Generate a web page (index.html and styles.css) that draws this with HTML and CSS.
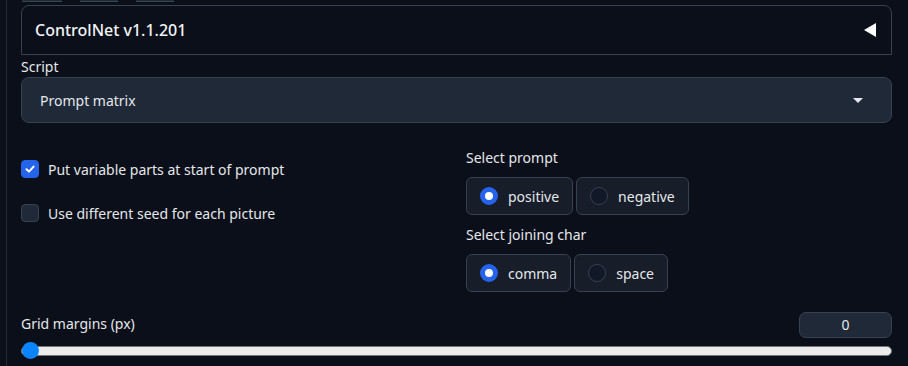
FILE: index.html
```html
<!DOCTYPE html>
<html lang="en">
<head>
<meta charset="UTF-8" />
<meta name="viewport" content="width=device-width, initial-scale=1" />
<title>Script settings</title>
<link rel="stylesheet" href="styles.css">
</head>
<body>

<div class="panel">
  <div class="tabs">
    <div class="tab"></div>
    <div class="tab"></div>
    <div class="tab"></div>
  </div>

  <div class="accordion">
    <span class="accordion-title">ControlNet v1.1.201</span>
    <svg class="accordion-icon" width="12" height="14" viewBox="0 0 12 14"><path d="M12 0 L12 14 L0 7 Z" fill="#fff"/></svg>
  </div>

  <div class="field-label script-label">Script</div>
  <div class="dropdown">
    <span>Prompt matrix</span>
    <svg class="caret" width="10" height="6" viewBox="0 0 10 6"><path d="M0 0 L10 0 L5 5 Z" fill="#e5e7eb"/></svg>
  </div>

  <div class="columns">
    <div class="col-left">
      <label class="check">
        <span class="box checked">
          <svg width="12" height="12" viewBox="0 0 12 12"><path d="M2.5 6.2 L5 8.6 L9.6 3.6" fill="none" stroke="#fff" stroke-width="2" stroke-linecap="round" stroke-linejoin="round"/></svg>
        </span>
        Put variable parts at start of prompt
      </label>
      <label class="check">
        <span class="box"></span>
        Use different seed for each picture
      </label>
    </div>
    <div class="col-right">
      <div class="field-label">Select prompt</div>
      <div class="radio-group">
        <div class="radio"><span class="dot on"></span>positive</div>
        <div class="radio"><span class="dot"></span>negative</div>
      </div>
      <div class="field-label">Select joining char</div>
      <div class="radio-group">
        <div class="radio"><span class="dot on"></span>comma</div>
        <div class="radio"><span class="dot"></span>space</div>
      </div>
    </div>
  </div>

  <div class="slider-head">
    <span class="field-label">Grid margins (px)</span>
    <div class="number">0</div>
  </div>
  <div class="slider">
    <div class="thumb"></div>
  </div>
</div>

</body>
</html>
```

FILE: styles.css
```css
body {
  margin: 0;
  background: #0b0f19;
  color: #e5e7eb;
  font-family: "Noto Sans", Arial, sans-serif;
  font-size: 14px;
  height: 366px;
  overflow: hidden;
}
.panel {
  margin-left: 6px;
  border-left: 1px solid #1f2937;
  padding: 0 15px 0 14px;
  width: 871px;
  min-height: 366px;
}
.tabs {
  display: flex;
  gap: 18px;
  height: 2px;
  padding-left: 1px;
}
.tab {
  width: 40px;
  height: 1px;
  background: #1f2937;
  border-bottom: 1px solid #374151;
}
.tab:nth-child(2) { width: 38px; }
.tab:nth-child(3) { width: 38px; }
.accordion {
  margin-top: 3px;
  height: 48px;
  border: 1px solid #374151;
  border-radius: 8px 8px 0 0;
  display: flex;
  align-items: center;
  justify-content: space-between;
  padding: 0 15px 0 13px;
}
.accordion-title {
  font-size: 16px;
  font-weight: 500;
  color: #f3f4f6;
}
.field-label {
  display: block;
  margin-top: 4px;
  height: 19px;
  line-height: 19px;
  color: #e5e7eb;
}
.script-label {
  margin-top: 2px;
  margin-bottom: 2px;
}
.dropdown {
  height: 44px;
  margin-top: -1px;
  background: #1f2937;
  border: 1px solid #374151;
  border-radius: 8px;
  display: flex;
  align-items: center;
  justify-content: space-between;
  padding: 0 28px 0 18px;
}
.caret {
  margin-top: 2px;
}
.columns {
  display: grid;
  grid-template-columns: 425px 426px;
  gap: 20px;
  margin-top: 25px;
}
.col-left {
  padding-top: 12px;
  display: flex;
  flex-direction: column;
  gap: 26px;
}
.check {
  display: flex;
  align-items: center;
  gap: 9px;
  height: 18px;
}
.box {
  width: 16px;
  height: 16px;
  border: 1px solid #374151;
  background: #1f2937;
  border-radius: 4px;
  display: flex;
  align-items: center;
  justify-content: center;
}
.box.checked {
  background: #2563eb;
  border-color: #2563eb;
}
.col-right .field-label {
  margin-top: 0;
  margin-bottom: 10px;
}
.radio-group {
  display: flex;
  gap: 3px;
  margin-bottom: 10px;
}
.radio {
  height: 36px;
  border: 1px solid #374151;
  background: #171d29;
  border-radius: 6px;
  display: flex;
  align-items: center;
  gap: 10px;
  padding: 0 13px 0 13px;
}
.dot {
  width: 16px;
  height: 16px;
  border-radius: 50%;
  border: 1px solid #374151;
  background: #111827;
}
.dot.on {
  background: #fff;
  border: 5px solid #2563eb;
  width: 8px;
  height: 8px;
}
.slider-head {
  display: flex;
  justify-content: space-between;
  align-items: flex-end;
  margin-top: 8px;
}
.slider-head .field-label {
  margin-bottom: 5px;
}
.number {
  width: 91px;
  height: 24px;
  line-height: 24px;
  text-align: center;
  background: #1f2937;
  border: 1px solid #374151;
  border-radius: 7px;
}
.slider {
  position: relative;
  margin-top: 8px;
  height: 8px;
  background: #ececec;
  border: 1px solid #767676;
  border-radius: 5px;
}
.thumb {
  position: absolute;
  left: 0;
  top: -5px;
  width: 17px;
  height: 17px;
  border-radius: 50%;
  background: #0a84ff;
}
```
